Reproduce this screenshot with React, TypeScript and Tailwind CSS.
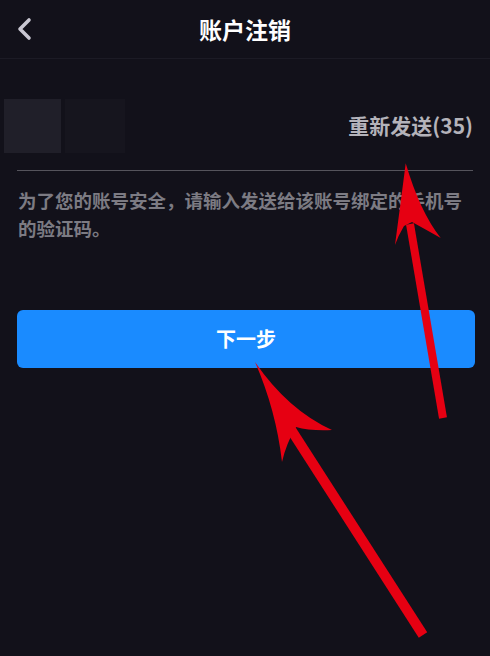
import React from "react";

const font = { fontFamily: '"Noto Sans CJK SC", "Noto Sans", sans-serif' };

function Arrows() {
  return (
    <svg
      className="pointer-events-none absolute inset-0 h-full w-full"
      viewBox="0 0 490 656"
      fill="none"
    >
      {/* arrow pointing at the resend countdown */}
      <line x1="410" y1="224" x2="443" y2="418" stroke="#e60012" strokeWidth="8" />
      <path
        d="M405.7 163.3 Q420 212 440.7 238 Q423 228 412 222 L404 226 Q398 236 395 245 Q401 200 405.7 163.3 Z"
        fill="#e60012"
      />
      {/* arrow pointing at the next button */}
      <line x1="290" y1="428" x2="423" y2="635" stroke="#e60012" strokeWidth="10" />
      <path
        d="M255 362 Q288 410 332 430 Q310 431 296 427 Q286 444 282 462 Q276 410 255 362 Z"
        fill="#e60012"
      />
    </svg>
  );
}

export default function App() {
  return (
    <div className="relative h-[656px] w-full overflow-hidden bg-[#12111a]" style={font}>
      <div className="grid h-[59px] grid-cols-[1fr_auto_1fr] items-center border-b border-[#1c1b25]">
        <div className="pl-[16px]">
          <svg width="18" height="24" viewBox="0 0 18 24" fill="none">
            <path
              d="M13 3 L4 12 L13 21"
              stroke="#c9c7d2"
              strokeWidth="3.6"
              strokeLinecap="round"
              strokeLinejoin="round"
            />
          </svg>
        </div>
        <h1 className="text-[23px] font-bold text-white">账户注销</h1>
        <div />
      </div>

      <div className="mt-[40px] flex items-center justify-between pl-[4px] pr-[17px]">
        <div className="flex gap-[4px]">
          <div className="h-[54px] w-[57px] bg-[#201f29]" />
          <div className="h-[54px] w-[60px] bg-[#16151e]" />
        </div>
        <span className="text-[21px] font-bold text-[#b4b3ba]">重新发送(35)</span>
      </div>

      <div className="mx-[17px] mt-[17px] h-px bg-[#55545c]" />

      <p className="mt-[15px] px-[18px] text-[18.5px] font-semibold leading-[28px] text-[#7c7b83]">
        为了您的账号安全，请输入发送给该账号绑定的手机号的验证码。
      </p>

      <button
        type="button"
        className="mx-[17px] mt-[68px] flex h-[58px] w-[458px] items-center justify-center rounded-md bg-[#1a8bff] text-[20px] font-bold text-white"
      >
        下一步
      </button>

      <Arrows />
    </div>
  );
}
